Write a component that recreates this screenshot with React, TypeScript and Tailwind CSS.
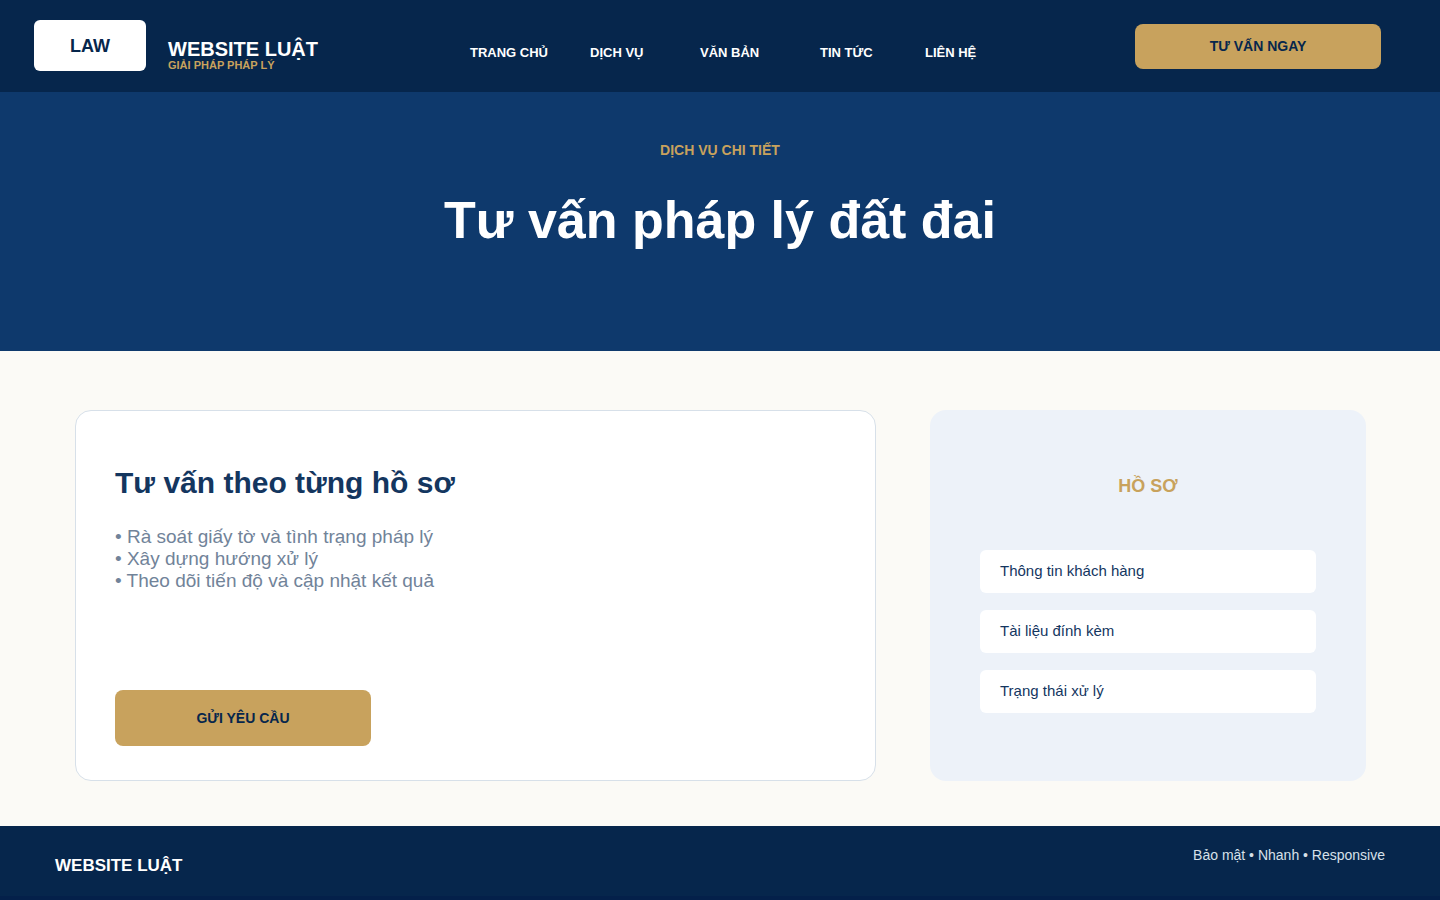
const navLinks = ["TRANG CHỦ", "DỊCH VỤ", "VĂN BẢN", "TIN TỨC", "LIÊN HỆ"];

const serviceSteps = [
  "Rà soát giấy tờ và tình trạng pháp lý",
  "Xây dựng hướng xử lý",
  "Theo dõi tiến độ và cập nhật kết quả",
];

const profileItems = [
  "Thông tin khách hàng",
  "Tài liệu đính kèm",
  "Trạng thái xử lý",
];

function Header() {
  return (
    <header className="flex min-h-[92px] items-start bg-[#06264c] pr-[59px] pl-[34px]">
      <a href="#" className="flex w-[436px] items-start gap-[22px]">
        <span className="mt-5 flex h-[51px] w-28 items-center justify-center rounded-md bg-white text-lg font-bold text-[#06264c]">
          LAW
        </span>
        <span className="mt-[39px] flex flex-col font-bold">
          <span className="text-xl leading-5 text-white">WEBSITE LUẬT</span>
          <span className="text-[11px] leading-3 text-[#c8a25d]">
            GIẢI PHÁP PHÁP LÝ
          </span>
        </span>
      </a>

      <nav className="mt-[45px] grid grid-cols-[120px_110px_120px_105px_auto] text-[13px] leading-4 font-bold text-white">
        {navLinks.map((link) => (
          <a key={link} href="#">
            {link}
          </a>
        ))}
      </nav>

      <button
        type="button"
        className="mt-6 ml-auto h-[45px] w-[246px] rounded-lg bg-[#c8a25d] pb-0.5 text-sm font-bold text-[#06264c]"
      >
        TƯ VẤN NGAY
      </button>
    </header>
  );
}

function Hero() {
  return (
    <section className="bg-[#0e396c] pt-12 pb-[98px] text-center font-bold">
      <p className="text-sm leading-5 text-[#c8a25d]">DỊCH VỤ CHI TIẾT</p>
      <h1 className="mt-7 text-[52px] leading-[65px] text-white">
        Tư vấn pháp lý đất đai
      </h1>
    </section>
  );
}

function ServiceCard() {
  return (
    <section className="rounded-2xl border border-[#d7e0e9] bg-white px-[39px] pt-[52px] pb-[34px]">
      <h2 className="text-[30px] leading-10 font-bold text-[#14365f]">
        Tư vấn theo từng hồ sơ
      </h2>
      <ul className="mt-[23px] text-[19px] leading-[22px] text-[#718399]">
        {serviceSteps.map((step) => (
          <li key={step}>• {step}</li>
        ))}
      </ul>
      <button
        type="button"
        className="mt-[98px] h-14 w-64 rounded-lg bg-[#c8a25d] text-sm font-bold text-[#06264c]"
      >
        GỬI YÊU CẦU
      </button>
    </section>
  );
}

function ProfileCard() {
  return (
    <aside className="rounded-2xl bg-[#edf2f9] px-[50px] pt-16">
      <h2 className="text-center text-lg leading-6 font-bold text-[#c8a25d]">
        HỒ SƠ
      </h2>
      <ul className="mt-[52px] flex flex-col gap-[17px] text-[15px] leading-[41px] text-[#14365f]">
        {profileItems.map((item) => (
          <li key={item} className="rounded-md bg-white px-5 pb-0.5">
            {item}
          </li>
        ))}
      </ul>
    </aside>
  );
}

function Footer() {
  return (
    <footer className="flex flex-1 items-start justify-between border-b-4 border-[#04204a] bg-[#06264c] px-[55px]">
      <p className="mt-7 text-[17px] leading-6 font-bold text-white">
        WEBSITE LUẬT
      </p>
      <p className="mt-[19px] text-sm leading-5 text-[#d7e0e9]">
        Bảo mật • Nhanh • Responsive
      </p>
    </footer>
  );
}

export default function App() {
  return (
    <div className="flex min-h-screen flex-col bg-[#fbfaf6] font-['Liberation_Sans',Arial,sans-serif]">
      <Header />
      <Hero />
      <main className="grid grid-cols-[801fr_436fr] gap-[54px] pt-[59px] pr-[74px] pb-[45px] pl-[75px]">
        <ServiceCard />
        <ProfileCard />
      </main>
      <Footer />
    </div>
  );
}
